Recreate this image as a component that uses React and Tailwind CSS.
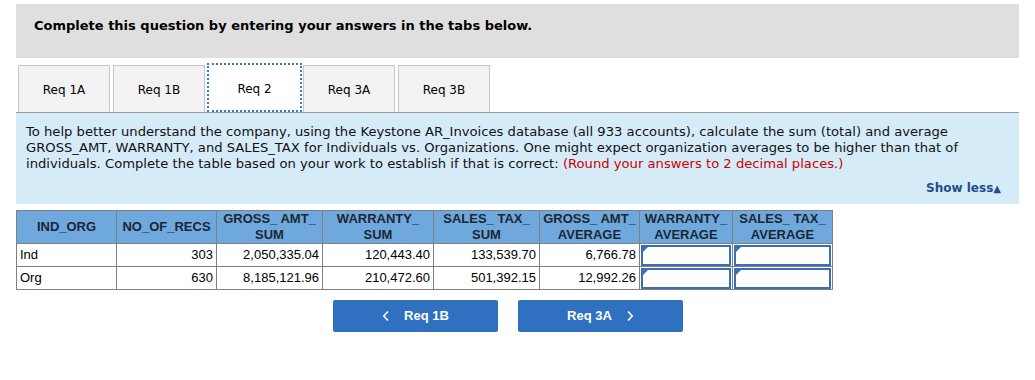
import React from "react";

const tabs = ["Req 1A", "Req 1B", "Req 2", "Req 3A", "Req 3B"];

const rows = [
  { org: "Ind", recs: "303", gross: "2,050,335.04", warranty: "120,443.40", tax: "133,539.70", grossAvg: "6,766.78" },
  { org: "Org", recs: "630", gross: "8,185,121.96", warranty: "210,472.60", tax: "501,392.15", grossAvg: "12,992.26" },
];

// header labels, split into their two printed lines
const headers = [
  { top: "IND_ORG", w: "w-[100px]" },
  { top: "NO_OF_RECS", w: "w-[100px]" },
  { top: "GROSS_ AMT_", bottom: "SUM", w: "w-[106px]" },
  { top: "WARRANTY_", bottom: "SUM", w: "w-[111px]" },
  { top: "SALES_ TAX_", bottom: "SUM", w: "w-[106px]" },
  { top: "GROSS_ AMT_", bottom: "AVERAGE", w: "w-[100px]" },
  { top: "WARRANTY_", bottom: "AVERAGE", w: "w-[93px]" },
  { top: "SALES_ TAX_", bottom: "AVERAGE", w: "w-[100px]" },
];

const AnswerCell = () => (
  <td className="border border-[#808080] p-0 h-[23px]">
    <div className="relative h-[21px] mx-px border-2 border-[#3a6fb5] bg-white">
      <span className="absolute left-0 top-0 w-0 h-0 border-t-[5px] border-r-[5px] border-t-[#3a6fb5] border-r-transparent" />
    </div>
  </td>
);

const Chevron = ({ dir }) => (
  <svg width="8" height="12" viewBox="0 0 8 12" fill="none">
    <path
      d={dir === "left" ? "M6 1.5 L1.8 6 L6 10.5" : "M2 1.5 L6.2 6 L2 10.5"}
      stroke="white"
      strokeWidth="1.6"
    />
  </svg>
);

export default function App() {
  const tdNum = "border border-[#808080] text-right px-[3px] h-[23px]";

  return (
    <div className="bg-white w-[1035px] h-[380px] px-4 pt-1 font-['DejaVu_Sans',Verdana,sans-serif] text-black">
      {/* header box */}
      <div className="bg-[#dfdfdf] h-[54px] pl-[18px] pt-[14px]">
        <p className="text-[13px] font-bold leading-4">Complete this question by entering your answers in the tabs below.</p>
      </div>

      {/* tabs */}
      <div className="flex gap-[3px] pl-[2px] mt-[7px] h-[47px]">
        {tabs.map((t) =>
          t === "Req 2" ? (
            <div
              key={t}
              className="w-[95px] h-[49px] -mt-[2px] -mb-px -ml-px -mr-[2px] bg-white outline-2 outline-dotted outline-[#3a78c9] -outline-offset-2 flex items-center justify-center text-[12px] pt-[2px] relative z-10"
            >
              {t}
            </div>
          ) : (
            <div
              key={t}
              className="w-[92px] h-[47px] bg-[#f2f2f2] border border-[#c8c8c8] border-b-0 flex items-center justify-center text-[12px] pt-[2px]"
            >
              {t}
            </div>
          )
        )}
      </div>

      {/* instructions panel */}
      <div className="border-t border-[#999] bg-[#d6ebf8] h-[92px] pl-[10px] pr-[18px] pt-[11px]">
        <p className="text-[13.15px] leading-4 text-[#111]">
          To help better understand the company, using the Keystone AR_Invoices database (all 933 accounts), calculate the sum (total) and average
          GROSS_AMT, WARRANTY, and SALES_TAX for Individuals vs. Organizations. One might expect organization averages to be higher than that of
          individuals. Complete the table based on your work to establish if that is correct:{" "}
          <span className="text-[#cc0000]">(Round your answers to 2 decimal places.)</span>
        </p>
        <div className="flex justify-end mt-[8px]">
          <span className="text-[12px] font-bold text-[#1f4e8c] leading-4">
            Show less<span className="text-[10px]">▲</span>
          </span>
        </div>
      </div>

      {/* table */}
      <table className="mt-[6px] border-collapse border border-[#808080] font-['Liberation_Sans',Arial,sans-serif] text-[13px]">
        <thead>
          <tr className="bg-[#6fa8dc] h-[33px]">
            {headers.map((h, i) => (
              <th
                key={i}
                className={`${h.w} border border-[#808080] font-bold text-[#1c2633] leading-4 text-center px-0`}
              >
                {h.top}
                {h.bottom && (
                  <>
                    <br />
                    {h.bottom}
                  </>
                )}
              </th>
            ))}
          </tr>
        </thead>
        <tbody>
          {rows.map((r) => (
            <tr key={r.org}>
              <td className="border border-[#808080] text-left px-[3px] h-[23px]">{r.org}</td>
              <td className={tdNum}>{r.recs}</td>
              <td className={tdNum}>{r.gross}</td>
              <td className={tdNum}>{r.warranty}</td>
              <td className={tdNum}>{r.tax}</td>
              <td className={tdNum}>{r.grossAvg}</td>
              <AnswerCell />
              <AnswerCell />
            </tr>
          ))}
        </tbody>
      </table>

      {/* nav buttons */}
      <div className="flex gap-[20px] ml-[317px] mt-[10px] font-['Liberation_Sans',Arial,sans-serif]">
        <button className="w-[165px] h-[32px] bg-[#2f70c0] rounded-[2px] text-white text-[13px] font-bold flex items-center justify-center gap-[14px]">
          <Chevron dir="left" />
          <span>Req 1B</span>
        </button>
        <button className="w-[165px] h-[32px] bg-[#2f70c0] rounded-[2px] text-white text-[13px] font-bold flex items-center justify-center gap-[14px]">
          <span>Req 3A</span>
          <Chevron dir="right" />
        </button>
      </div>
    </div>
  );
}
